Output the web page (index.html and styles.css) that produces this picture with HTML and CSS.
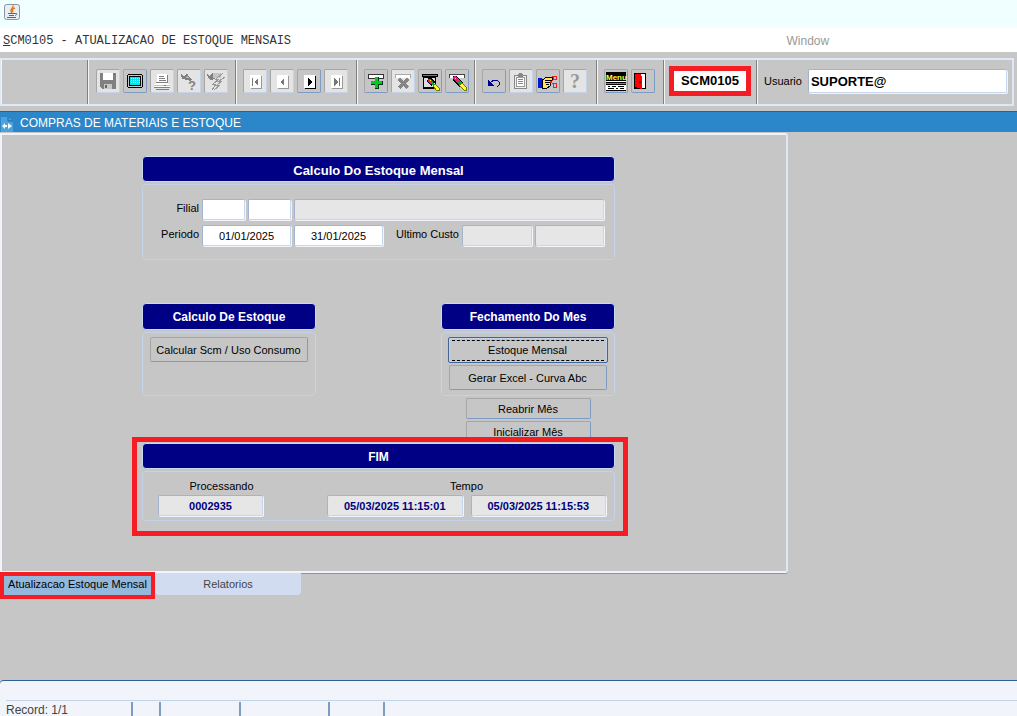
FILE: index.html
```html
<!DOCTYPE html>
<html lang="pt-BR">
<head>
    <meta charset="UTF-8">
    <meta name="viewport" content="width=device-width, initial-scale=1.0">
    <title>SCM0105</title>
    <link rel="stylesheet" href="styles.css">
</head>
<body>
    <header class="titlebar">
        <svg class="java-icon" viewBox="0 0 16 16">
            <rect x="0.5" y="0.5" width="15" height="15" rx="2" fill="#e9eef2" stroke="#8795a1"/>
            <path d="M9 1.500C10 4 6 5 7 7L8 9M11 4C8 5 8 6 9 8" fill="none" stroke="#e97824" stroke-width="1.5"/>
            <path d="M4 9.500H11M5 11.500H10M3 13.500H12M11 9.500C14 9 13 11 11 11.500" fill="none" stroke="#456b8c"/>
        </svg>
    </header>
    <nav class="menubar">
        <a href="#" class="menu-main"><u>S</u>CM0105 - ATUALIZACAO DE ESTOQUE MENSAIS</a>
        <a href="#" class="menu-window">Window</a>
    </nav>

    <div class="toolbar">
        <div class="group group-blank"></div>
        <div class="group group-file">
            <button class="tool" disabled aria-label="Salvar">
                <svg viewBox="1 1 22 22">
                    <path d="M4 4H20V20H6L4 18Z" fill="#808080"/>
                    <path d="M7 4H17V11H7Z" fill="#fff"/>
                    <path d="M8 15H16V20H8Z" fill="#c8c8c8"/>
                    <path d="M9 16H11V19H9ZM18 5H19V6H18Z" fill="#666"/>
                </svg>
            </button>
            <button class="tool active" aria-label="Tela">
                <svg viewBox="1 1 22 22">
                    <path d="M5 5H19V6H20V18H19V19H5V18H4V6H5Z" fill="#000"/>
                    <path d="M5 6H19V18H5Z" fill="#c6c6c6"/>
                    <path d="M6 7H18V17H6Z" fill="#000"/>
                    <path d="M7 8H17V16H7Z" fill="#00e5ee"/>
                    <path d="M8 9.500H17M8 11.500H17M8 13.500H17" stroke="#9ff" stroke-dasharray="1 1"/>
                </svg>
            </button>
            <button class="tool" disabled aria-label="Imprimir">
                <svg viewBox="1 1 22 22">
                    <path d="M7 5H17V14H18V15H6V14H7Z" fill="#fff"/>
                    <path d="M9 7.500H14M9 9.500H15M9 11.500H16M17.500 6V13M6 13.500H18" stroke="#808080"/>
                    <path d="M4 15H20V18H4Z" fill="#fff"/>
                    <path d="M4 16.500H20" stroke="#c0c0c0"/>
                    <path d="M4 18.500H20M6 20.500H19" stroke="#808080"/>
                    <path d="M14 16H16V17H14Z" fill="#777"/>
                </svg>
            </button>
            <button class="tool" disabled aria-label="Executar consulta">
                <svg viewBox="1 1 22 22">
                    <path d="M4 5L7 8L10 4L11 6L15 11L13 12L10 11L5 10Z" fill="#808080"/>
                    <path d="M8 9L11 6L12 9Z" fill="#b8b8b8"/>
                    <text x="11" y="21" class="glyph-small">?</text>
                </svg>
            </button>
            <button class="tool" disabled aria-label="Cancelar consulta">
                <svg viewBox="1 1 22 22">
                    <path d="M3 5L6 7L8 4L11 7V10L6 11L4 9Z" fill="#808080"/>
                    <path d="M9 4H17V9H9Z" fill="#c4c4c4"/>
                    <path d="M19 4L12 10H15L9 15H12L8 21M21 8L15 12H18L13 16H16L10 21" fill="none" stroke="#999"/>
                </svg>
            </button>
        </div>
        <div class="group group-nav">
            <button class="tool" disabled aria-label="Primeiro">
                <svg viewBox="1 1 22 22">
                    <path d="M8 7H19V20H8Z" fill="#999"/><path d="M7 6H18V19H7Z" fill="#fff"/>
                    <path d="M9 9H10V17H9ZM15 9V17L11 13Z" fill="#777"/>
                </svg>
            </button>
            <button class="tool" disabled aria-label="Anterior">
                <svg viewBox="1 1 22 22">
                    <path d="M8 7H19V20H8Z" fill="#999"/><path d="M7 6H18V19H7Z" fill="#fff"/>
                    <path d="M14 9V17L10 13Z" fill="#777"/>
                </svg>
            </button>
            <button class="tool active" aria-label="Proximo">
                <svg viewBox="1 1 22 22">
                    <path d="M8 7H19V20H8Z" fill="#000"/><path d="M7 6H18V19H7Z" fill="#fff"/>
                    <path d="M11 9V17L15 13Z" fill="#000"/>
                </svg>
            </button>
            <button class="tool" disabled aria-label="Ultimo">
                <svg viewBox="1 1 22 22">
                    <path d="M8 7H19V20H8Z" fill="#999"/><path d="M7 6H18V19H7Z" fill="#fff"/>
                    <path d="M10 9V17L14 13ZM15 9H16V17H15Z" fill="#777"/>
                </svg>
            </button>
        </div>
        <div class="group group-record">
            <button class="tool active" aria-label="Inserir registro">
                <svg viewBox="1 1 22 22">
                    <path d="M4 5H20V10H4Z" fill="#333"/><path d="M5 6H19V9H5Z" fill="#fff"/>
                    <path d="M11 8H15V12H19V16H15V20H11V16H7V12H11Z" fill="#032"/>
                    <path d="M11 8H14V12H18V15H14V19H11V15H7V12H11Z" fill="#0c1"/>
                </svg>
            </button>
            <button class="tool" disabled aria-label="Excluir registro">
                <svg viewBox="1 1 22 22">
                    <path d="M4 5H20V9H4Z" fill="#aaa"/><path d="M5 6H19V9H5Z" fill="#fff"/>
                    <path d="M8 10L17 19M17 10L8 19" stroke="#858585" stroke-width="3"/>
                </svg>
            </button>
            <button class="tool active" aria-label="Limpar bloco">
                <svg viewBox="1 1 22 22">
                    <path d="M4 5H20V8H18V20H5V8H4Z" fill="#000"/>
                    <path d="M5 6H19V7H5Z" fill="#0aa"/>
                    <path d="M6 9H17V18H6Z" fill="#ddd"/>
                    <path d="M10 9L13 9L17 13L13 17L9 13Z" fill="#000"/>
                    <path d="M10 10H13L15 13L12 15L10 13Z" fill="#f0147c"/>
                    <path d="M12 11H13V12H12Z" fill="#ff0"/>
                    <path d="M14 13L17 15L15 17L13 15Z" fill="#0a3"/>
                    <path d="M17 15L21 19V21H18L15 17Z" fill="#ff3" stroke="#770"/>
                </svg>
            </button>
            <button class="tool active" aria-label="Limpar registro">
                <svg viewBox="1 1 22 22">
                    <path d="M4 5H20V9H4Z" fill="#444"/><path d="M5 6H19V9H5Z" fill="#fff"/>
                    <path d="M8 7H12L18 14L14 18L8 11Z" fill="#000"/>
                    <path d="M9 7H11L15 12L12 14L8 10Z" fill="#f0147c"/>
                    <path d="M10 9H11V10H10Z" fill="#ff0"/>
                    <path d="M15 12L17 14L14 16L12 14Z" fill="#0a3"/>
                    <path d="M17 14L21 18V21H19L14 16Z" fill="#ff3" stroke="#770"/>
                </svg>
            </button>
        </div>
        <div class="group group-edit">
            <button class="tool active" aria-label="Desfazer">
                <svg viewBox="1 1 22 22">
                    <path d="M8 14L12 11H15L17 13V16L15 18" fill="none" stroke="#000090" stroke-width="1"/>
                    <path d="M6 11V17H12Z" fill="#000090"/>
                </svg>
            </button>
            <button class="tool" disabled aria-label="Lista de valores">
                <svg viewBox="1 1 22 22">
                    <path d="M5.500 6.500H17.500V19.500H5.500Z" fill="#eee" stroke="#888"/>
                    <path d="M7.500 8.500H15.500V17.500H7.500Z" fill="#fff" stroke="#999"/>
                    <path d="M9 5H10V4H13V5H14V8H9Z" fill="#888"/>
                    <path d="M9 10.500H14M9 12.500H14M9 14.500H14" stroke="#888"/>
                </svg>
            </button>
            <button class="tool active" aria-label="Editar">
                <svg viewBox="1 1 22 22">
                    <path d="M2 9H6V19H2Z" fill="#0018d8"/>
                    <path d="M6 10H8L10 8H16V11H14V17L11 19H6Z" fill="#ffe45c" stroke="#000"/>
                    <path d="M9 11.500H15M9 13.500H14M10 15.500H13" stroke="#000"/>
                    <path d="M14 14L18 10M14 12L18 16" stroke="#e22"/>
                    <path d="M17 7.500H20.500V10.500H17.500ZM17.500 14.500H20.500V18.500H17.500Z" fill="none" stroke="#e22"/>
                </svg>
            </button>
            <button class="tool" disabled aria-label="Ajuda">
                <svg viewBox="1 1 22 22"><text x="7" y="19" class="glyph-help">?</text></svg>
            </button>
        </div>
        <div class="group group-exit">
            <button class="tool active" aria-label="Abrir menu">
                <svg viewBox="1 1 22 22">
                    <path d="M2 3H22V12H2Z" fill="#000"/>
                    <text x="2" y="11" class="glyph-menu">Menu</text>
                    <path d="M2 12H22V22H2Z" fill="#000"/>
                    <path d="M2 12H22V13H2Z" fill="#fff"/>
                    <path d="M2 14H22V15H2Z" fill="#0bb"/>
                    <path d="M2 16H22V21H2Z" fill="#fff"/>
                    <path d="M4 17.500H6M8 17.500H12M14 17.500H20M4 19.500H10M12 19.500H14M16 19.500H20" stroke="#000"/>
                </svg>
            </button>
            <button class="tool active" aria-label="Sair">
                <svg viewBox="1 1 22 22">
                    <path d="M3 4H15V20H3Z" fill="#000"/>
                    <path d="M9 5H14V19H9Z" fill="#fff"/>
                    <path d="M4 5H10V7H11V20L4 18Z" fill="#f00"/>
                    <path d="M8 12H10V14H8Z" fill="#800"/>
                </svg>
            </button>
        </div>
        <div class="group group-code">
            <output class="highlight code">SCM0105</output>
        </div>
        <div class="group group-user">
            <label for="usuario">Usuario</label>
            <input type="text" id="usuario" value="SUPORTE@">
        </div>
    </div>

    <div class="window-title">
        <svg viewBox="0 0 14 18">
            <path d="M1 3H8L13 7V18H1Z" fill="#4aa3df"/>
            <path d="M8 3V7H13" fill="none" stroke="#20639b"/>
            <path d="M5 9V15L2 12ZM8 9V15L12 12Z" fill="#fff"/>
            <path d="M5 11H7V13H5Z" fill="#fff"/>
        </svg>
        <h1>COMPRAS DE MATERIAIS E ESTOQUE</h1>
    </div>

    <main>
        <div class="canvas">
            <form class="form">
                <section>
                    <h2 class="banner banner-large">Calculo Do Estoque Mensal</h2>
                    <div class="box filters">
                        <div class="row">
                            <label for="filial">Filial</label>
                            <input type="text" id="filial" class="w-code">
                            <input type="text" class="w-code" aria-label="Codigo">
                            <input type="text" class="fill" readonly aria-label="Nome da filial">
                        </div>
                        <div class="row">
                            <label for="periodo">Periodo</label>
                            <input type="text" id="periodo" class="w-date" value="01/01/2025">
                            <input type="text" class="w-date" value="31/01/2025" aria-label="Periodo final">
                            <label for="custo" class="label-custo">Ultimo Custo</label>
                            <input type="text" id="custo" class="fill" readonly>
                            <input type="text" class="fill" readonly aria-label="Ultimo custo final">
                        </div>
                    </div>
                </section>

                <div class="columns">
                    <section class="column">
                        <h2 class="banner">Calculo De Estoque</h2>
                        <div class="box actions">
                            <button type="button" class="btn">Calcular Scm / Uso Consumo</button>
                        </div>
                    </section>
                    <section class="column">
                        <h2 class="banner">Fechamento Do Mes</h2>
                        <div class="box actions">
                            <button type="button" class="btn focused"><span>Estoque Mensal</span></button>
                            <button type="button" class="btn">Gerar Excel - Curva Abc</button>
                        </div>
                        <div class="extra">
                            <button type="button" class="btn btn-short">Reabrir Mês</button>
                            <button type="button" class="btn btn-short">Inicializar Mês</button>
                        </div>
                    </section>
                </div>

                <section class="highlight result">
                    <h2 class="banner">FIM</h2>
                    <div class="box status">
                        <div class="field field-count">
                            <label for="processando">Processando</label>
                            <input type="text" id="processando" value="0002935" readonly>
                        </div>
                        <div class="field field-time">
                            <label for="tempo">Tempo</label>
                            <div class="times">
                                <input type="text" id="tempo" value="05/03/2025 11:15:01" readonly>
                                <input type="text" value="05/03/2025 11:15:53" readonly aria-label="Tempo final">
                            </div>
                        </div>
                    </div>
                </section>
            </form>
        </div>
        <div class="tabs">
            <button class="tab highlight selected">Atualizacao Estoque Mensal</button>
            <button class="tab">Relatorios</button>
        </div>
    </main>

    <footer class="statusbar">
        <div class="cells">
            <span class="cell cell-record">Record: 1/1</span>
            <span class="cell cell-xs"></span>
            <span class="cell cell-md"></span>
            <span class="cell cell-lg"></span>
            <span class="cell cell-sm"></span>
        </div>
    </footer>
</body>
</html>
```
FILE: styles.css
```css
* {
    box-sizing: border-box;
}
body {
    margin: 0;
    height: 100vh;
    display: flex;
    flex-direction: column;
    overflow: hidden;
    background: #c6c6c6;
    color: #000;
    font: 11px/14px "Liberation Sans", Arial, sans-serif;
}
button, input {
    font: inherit;
    color: inherit;
    margin: 0;
}
h1, h2 {
    margin: 0;
}

/* title and menu */
.titlebar {
    height: 28px;
    padding: 4px;
    background: #f0ffff;
}
.java-icon {
    display: block;
    width: 16px;
    height: 16px;
}
.menubar {
    display: flex;
    align-items: center;
    height: 24px;
    padding: 2px 3px 0;
    background: #fff;
}
.menubar a {
    text-decoration: none;
}
.menu-main {
    flex: 0 0 77.5%;
    color: #333;
    font: 12px/16px "Liberation Mono", "Courier New", monospace;
}
.menu-window {
    color: #999;
    font-size: 12px;
}

/* toolbar */
.toolbar {
    display: flex;
    height: 48px;
    margin: 6px 3px 5px 0;
    border: 2px solid #dfe9f6;
    border-left-width: 1px;
}
.group {
    display: flex;
    align-items: center;
    gap: 3px;
    padding: 0 6px 2px;
    border-left: 1px solid #f4f4f4;
    border-right: 1px solid #808080;
}
.group-blank {
    width: 87px;
}
.group-file {
    width: 148px;
    padding-left: 7px;
}
.group-nav {
    width: 121px;
}
.group-record {
    width: 118px;
}
.group-edit {
    width: 122px;
}
.group-exit {
    width: 67px;
}
.group-code {
    width: 93px;
    padding: 0 5px 2px 4px;
}
.group-user {
    flex: 1;
    gap: 6px;
    padding: 0 5px 2px 6px;
    border-right: 0;
}
.tool {
    width: 24px;
    height: 24px;
    padding: 0;
    border: 1px solid #a6a6a6;
    border-right-color: #c3d3ea;
    border-bottom-color: #c3d3ea;
    border-radius: 2px;
    background: #e4e4e4;
}
.tool.active {
    border-right-color: #7c9cc4;
    border-bottom-color: #7c9cc4;
    background: #c6c6c6;
}
.tool svg {
    display: block;
    width: 22px;
    height: 22px;
    shape-rendering: crispEdges;
}
.glyph-small {
    font: bold 13px "Liberation Sans", sans-serif;
    fill: #808080;
}
.glyph-help {
    font: bold 20px "Liberation Serif", serif;
    fill: #999;
}
.glyph-menu {
    font: bold 8px "Liberation Sans", sans-serif;
    fill: #ff3;
}
.highlight {
    border: 5px solid #f51c24;
}
.code {
    flex: 1;
    height: 30px;
    background: #fff;
    font-size: 13px;
    font-weight: bold;
    line-height: 20px;
    text-align: center;
}
input {
    min-width: 0;
    height: 21px;
    padding: 0 2px;
    border: 1px solid #a3b4cc;
    border-right-color: #c5d6ef;
    border-bottom-color: #c5d6ef;
    border-radius: 2px;
    outline: 0;
    background: #fff;
    box-shadow: 1px 1px 0 #f2f6fc;
    text-align: center;
}
input[readonly] {
    background: #e6e6e6;
}
.group-user input {
    flex: 1;
    height: 24px;
    font-size: 13px;
    font-weight: bold;
    text-align: left;
}

/* inner window */
.window-title {
    display: flex;
    align-items: center;
    gap: 6px;
    height: 21px;
    padding-top: 1px;
    border-top: 1px solid #2f5f96;
    background: #2b87c9;
    color: #fff;
}
.window-title svg {
    width: 14px;
    height: 18px;
}
.window-title h1 {
    font-size: 12px;
    font-weight: normal;
}
main {
    flex: 1;
}
.canvas {
    max-width: 788px;
    height: 440px;
    margin-top: 1px;
    padding: 21px 171px 0 140px;
    border: 2px solid #f0f4fa;
    border-right-color: #dfe8f4;
    border-radius: 0 3px 3px 0;
    box-shadow: 0 1px 0 #7f97b5;
}
.banner {
    height: 27px;
    border: 1px solid #c9d9ef;
    border-radius: 4px;
    background: #000084;
    color: #fff;
    font-size: 12px;
    line-height: 27px;
    text-align: center;
}
.banner-large {
    height: 26px;
    font-size: 13px;
    line-height: 28px;
}
.box {
    margin-top: 2px;
    border: 1px solid #c3d3ea;
    border-radius: 4px;
}
.filters {
    display: flex;
    flex-direction: column;
    gap: 5px;
    height: 76px;
    padding: 14px 10px 0 14px;
}
.row {
    display: flex;
    align-items: flex-start;
    gap: 3px;
}
.row label {
    width: 42px;
    padding-top: 2px;
    text-align: right;
}
.row .label-custo {
    width: 73px;
}
.w-code {
    width: 43px;
}
.w-date {
    width: 89px;
}
.fill {
    flex: 1;
}
.columns {
    display: flex;
    justify-content: space-between;
    margin-top: 43px;
}
.column {
    width: 174px;
}
.actions {
    display: flex;
    flex-direction: column;
    align-items: center;
    gap: 2px;
    height: 64px;
    padding: 4px 7px 0 6px;
}
.btn {
    width: 158px;
    height: 25px;
    padding: 0;
    border: 1px solid #a6a6a6;
    border-right-color: #7c9cc4;
    border-bottom-color: #7c9cc4;
    border-radius: 2px;
    background: #c6c6c6;
}
.btn.focused {
    width: 160px;
    height: 26px;
    padding: 1px 3px;
    border: 1px solid #3f6696;
    box-shadow: inset 0 0 0 1px #c3d3ea;
}
.focused span {
    display: block;
    height: 21px;
    border-top: 1px dashed #000;
    border-bottom: 1px dashed #000;
    line-height: 19px;
}
.extra {
    display: flex;
    flex-direction: column;
    align-items: center;
    gap: 2px;
    margin-top: 2px;
}
.btn-short {
    width: 125px;
    height: 21px;
}

/* the result frame covers the lower edge of the last button */
.result {
    position: relative;
    margin: -5px -13px 0 -10px;
    padding: 1px 8px 10px 5px;
    background: #c6c6c6;
}
.result .banner {
    height: 26px;
}
.status {
    display: flex;
    justify-content: space-between;
    height: 50px;
    padding: 7px 8px 0 15px;
}
.field {
    display: flex;
    flex-direction: column;
    gap: 2px;
    text-align: center;
}
.field-count {
    width: 105px;
}
.field-time {
    width: 279px;
}
.field-count label {
    padding-left: 22px;
}
.times {
    display: flex;
    gap: 8px;
}
.times input {
    flex: 1;
}
.field input {
    color: #000080;
    font-weight: bold;
}

.tabs {
    display: flex;
    align-items: flex-start;
    margin-top: -1px;
}
.tab {
    width: 146px;
    height: 22px;
    margin-top: 1px;
    padding: 0;
    border: 0;
    border-radius: 0 0 4px 4px;
    background: #d1dcf1;
    color: #444;
}
.tab.selected {
    position: relative;
    width: 155px;
    height: 27px;
    margin-top: 0;
    padding-bottom: 3px;
    border: 4px solid #f51c24;
    border-radius: 0;
    background: #93b8dc;
    color: #000;
}

.statusbar {
    height: 36px;
    padding: 19px 0 0 6px;
    border-top: 1px solid #2f5f96;
    border-radius: 4px 0 0 0;
    background: #f1f5fb;
}
.cells {
    display: flex;
    height: 17px;
    border-top: 1px solid #c3d3ea;
}
.cell {
    margin-top: 1px;
    border-right: 2px solid #7f9cc0;
    color: #444;
    font-size: 12px;
    line-height: 16px;
}
.cell-record {
    width: 127px;
}
.cell-xs {
    width: 28px;
}
.cell-sm {
    width: 55px;
}
.cell-md {
    width: 80px;
}
.cell-lg {
    width: 89px;
}
```
